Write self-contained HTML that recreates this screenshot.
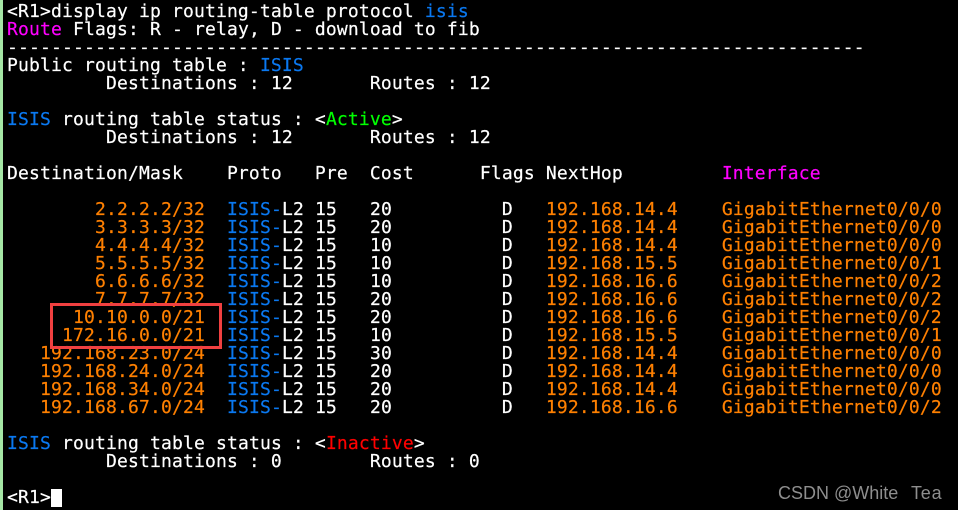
<!DOCTYPE html>
<html>
<head>
<meta charset="utf-8">
<style>
html,body{margin:0;padding:0;background:#000;}
body{width:958px;height:510px;overflow:hidden;position:relative;}
#strip{position:absolute;left:0;top:0;width:3px;height:510px;background:#a5e6a5;}
pre{position:absolute;left:7px;top:3px;margin:0;font-family:"DejaVu Sans Mono","Liberation Mono",monospace;font-size:18px;letter-spacing:0.16px;line-height:18px;color:#fff;white-space:pre;-webkit-text-stroke:0.2px currentColor;}
.b{color:#0a78f0;}
.o{color:#ff8000;}
.m{color:#ff00ff;}
.g{color:#00ff00;}
.r{color:#ff0000;}
#box{position:absolute;left:50px;top:303px;width:166px;height:40px;border:3px solid #f04040;}
#cur{position:absolute;left:51px;top:489px;width:11px;height:18px;background:#fff;}
.wm{position:absolute;top:483px;font-family:"Liberation Sans",sans-serif;font-size:18px;line-height:20px;color:#8e8e8e;white-space:pre;}
</style>
</head>
<body>
<div id="strip"></div>
<pre>&lt;R1&gt;display ip routing-table protocol <span class="b">isis</span>
<span class="m">Route</span> Flags: R - relay, D - download to fib
------------------------------------------------------------------------------
Public routing table : <span class="b">ISIS</span>
         Destinations : 12       Routes : 12

<span class="b">ISIS</span> routing table status : &lt;<span class="g">Active</span>&gt;
         Destinations : 12       Routes : 12

Destination/Mask    Proto   Pre  Cost      Flags NextHop         <span class="m">Interface</span>

        <span class="o">2.2.2.2/32</span>  <span class="b">ISIS-</span>L2 15   20          D   <span class="o">192.168.14.4</span>    <span class="o">GigabitEthernet0/0/0</span>
        <span class="o">3.3.3.3/32</span>  <span class="b">ISIS-</span>L2 15   20          D   <span class="o">192.168.14.4</span>    <span class="o">GigabitEthernet0/0/0</span>
        <span class="o">4.4.4.4/32</span>  <span class="b">ISIS-</span>L2 15   10          D   <span class="o">192.168.14.4</span>    <span class="o">GigabitEthernet0/0/0</span>
        <span class="o">5.5.5.5/32</span>  <span class="b">ISIS-</span>L2 15   10          D   <span class="o">192.168.15.5</span>    <span class="o">GigabitEthernet0/0/1</span>
        <span class="o">6.6.6.6/32</span>  <span class="b">ISIS-</span>L2 15   10          D   <span class="o">192.168.16.6</span>    <span class="o">GigabitEthernet0/0/2</span>
        <span class="o">7.7.7.7/32</span>  <span class="b">ISIS-</span>L2 15   20          D   <span class="o">192.168.16.6</span>    <span class="o">GigabitEthernet0/0/2</span>
      <span class="o">10.10.0.0/21</span>  <span class="b">ISIS-</span>L2 15   20          D   <span class="o">192.168.16.6</span>    <span class="o">GigabitEthernet0/0/2</span>
     <span class="o">172.16.0.0/21</span>  <span class="b">ISIS-</span>L2 15   10          D   <span class="o">192.168.15.5</span>    <span class="o">GigabitEthernet0/0/1</span>
   <span class="o">192.168.23.0/24</span>  <span class="b">ISIS-</span>L2 15   30          D   <span class="o">192.168.14.4</span>    <span class="o">GigabitEthernet0/0/0</span>
   <span class="o">192.168.24.0/24</span>  <span class="b">ISIS-</span>L2 15   20          D   <span class="o">192.168.14.4</span>    <span class="o">GigabitEthernet0/0/0</span>
   <span class="o">192.168.34.0/24</span>  <span class="b">ISIS-</span>L2 15   20          D   <span class="o">192.168.14.4</span>    <span class="o">GigabitEthernet0/0/0</span>
   <span class="o">192.168.67.0/24</span>  <span class="b">ISIS-</span>L2 15   20          D   <span class="o">192.168.16.6</span>    <span class="o">GigabitEthernet0/0/2</span>

<span class="b">ISIS</span> routing table status : &lt;<span class="r">Inactive</span>&gt;
         Destinations : 0        Routes : 0

&lt;R1&gt;</pre>
<div id="cur"></div>
<div id="box"></div>
<div class="wm" style="left:778px;">CSDN @White</div>
<div class="wm" style="left:911px;letter-spacing:0.8px;">Tea</div>
</body>
</html>
